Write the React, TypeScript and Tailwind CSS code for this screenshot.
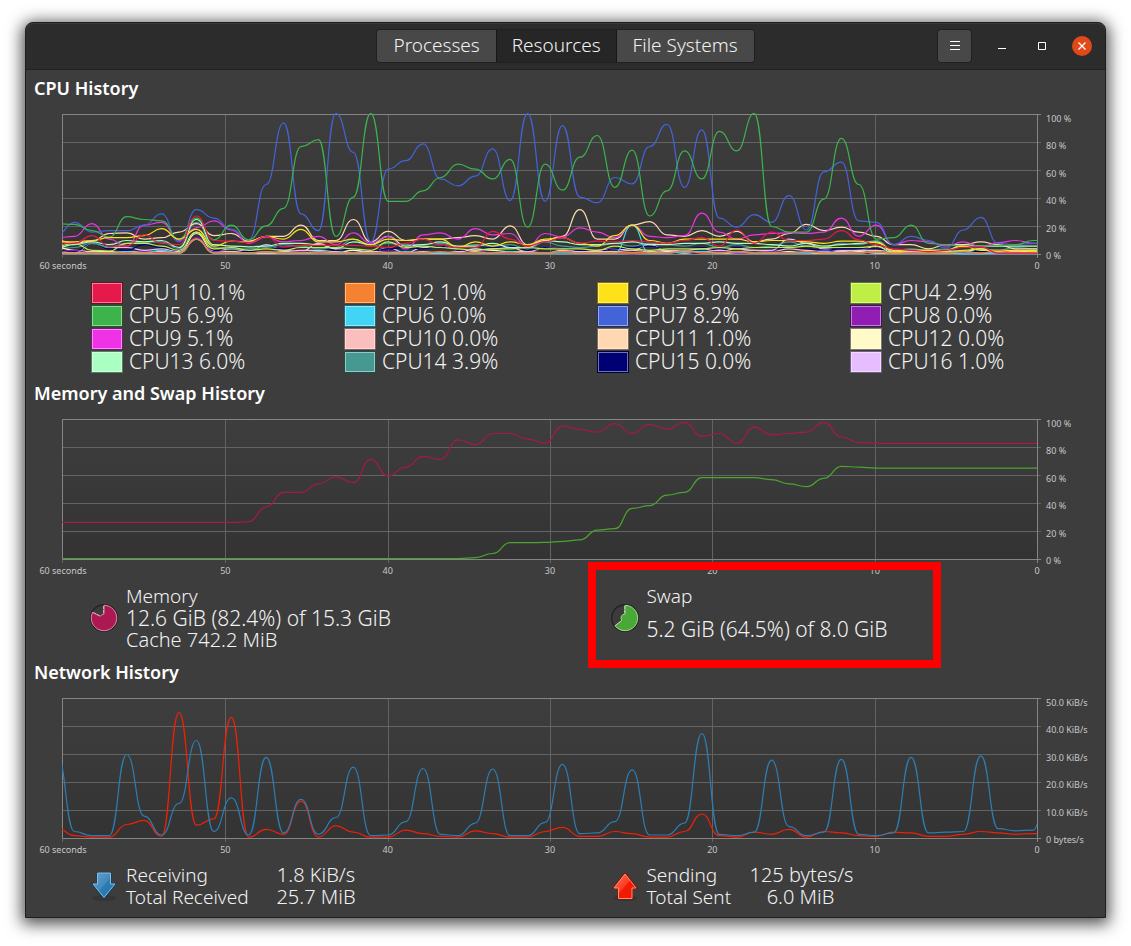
import { useId } from "react";
import type { ReactNode } from "react";

type Series = { name: string; color: string; values: number[] };

const STEP = 17.43;
const FIRST_X = -5;
const PLOT_WIDTH = 975;
const PLOT_HEIGHT = 140;

const fill = (count: number, value: number): number[] => Array<number>(count).fill(value);

const cpuSeries: Series[] = [
  { name: "CPU1", color: "#e6194b", values: [8, 8, 13.5, 6, 6, 14, 8, 7, 27.5, 10, 9.5, 8.5, 13, 5.5, 6.5, 6.5, 6.5, 6.5, 6, 5, 8, 11, 7, 5, 5, 16.5, 11, 6, 9, 12, 8, 9.5, 9, 10, 9, 8, 10, 12, 6, 17.5, 8, 16, 10, 10, 11, 17, 10.5, 7, 4, 3, 2, 3, 5, 5.5, 1, 1, 1, 1] },
  { name: "CPU2", color: "#f58231", values: [1, 1, 1, 1, 1, 1, 1, 1, 11, 1, 1, 1, 2, 1, 1, 1, 1, 1, 1, 1, 1, 1, 2, 1, 1, 1, 1, 1, 1, 2, 1, 1, 1, 1, 1, 1, 3, 1, 1, 2, 1, 1, 1, 2, 1, 1, 1, 2, 1, 1, 1, 1, 2, 1, 3, 1, 1, 1] },
  { name: "CPU3", color: "#ffe119", values: [9, 9, 10, 12, 12, 13.5, 18.5, 11, 18, 6, 9.5, 9, 13, 11, 18, 9, 9, 11, 7, 11, 10, 11, 11, 5, 9, 6, 9, 7, 11, 12, 8, 6, 13.5, 21, 10, 8, 11, 11, 11, 11, 9, 10, 10, 9, 8, 9.5, 9.5, 8.5, 3, 3, 3, 3, 6, 3, 3, 3, 3, 3] },
  { name: "CPU4", color: "#bfef45", values: [6, 8, 3, 2.5, 8, 8, 6, 3, 16, 4, 5, 3, 4, 3, 5, 5, 5, 4, 3, 9, 5, 6, 5, 4, 3, 4, 4, 5, 4, 4, 4, 3, 6, 4, 3, 4, 4, 4, 5, 4, 5, 5, 5, 6, 5, 5, 5, 6, 1, 3, 3, 2, 3, 4, 2, 3, 2, 2] },
  { name: "CPU5", color: "#3cb44b", values: [22, 21.5, 17, 12.5, 27, 25, 24, 11, 26, 10.5, 21, 10.5, 20.5, 33, 77, 82, 13, 41, 100.7, 38, 38, 45.5, 55, 64.5, 61, 54, 68, 19.5, 64.5, 46, 69.5, 85, 48, 74.5, 27.5, 45.5, 74, 54, 88, 74, 100.7, 20, 16, 16, 39.5, 83, 50, 11, 12, 21, 8, 7, 6, 6, 6.5, 7, 10, 10] },
  { name: "CPU6", color: "#42d4f4", values: [1, 1, 1, 1, 2, 1, 3, 1, 11, 1, 1, 1, 2, 1, 1, 2, 1, 1, 1, 1, 2, 1, 1, 1, 1, 1, 2, 1, 1, 1, 1, 1, 1, 21, 1, 1, 2, 2, 1, 2, 1, 1, 1, 1, 2, 1, 1, 2, 1, 1, 1, 1, 0.5, 0.5, 1, 1, 1, 1] },
  { name: "CPU7", color: "#4363d8", values: [14, 23, 16, 17, 17, 21, 29, 9, 32, 26, 18, 10.5, 50, 94, 29, 17, 100.7, 73, 9, 61, 67, 79, 54, 49, 56, 75.5, 38.5, 100.7, 38, 92, 41, 37, 55, 50.5, 77, 93, 48, 89, 26, 19.5, 28.5, 23, 42, 17.5, 59, 66, 24, 23, 7, 13, 10, 4.5, 17.5, 26.5, 8, 7, 8, 7] },
  { name: "CPU8", color: "#911eb4", values: [2, 3, 1, 1, 1, 2, 1, 1, 12, 2, 1, 1, 2, 1, 2, 1, 1, 1, 1, 2, 1, 1, 2, 1, 3, 1, 1, 1, 1, 2, 1, 1, 1, 0.5, 1, 1, 2, 1, 2, 1, 1, 2, 1, 1, 3, 1, 1, 2, 1, 1, 1, 2, 1, 1, 1, 1, 1, 1] },
  { name: "CPU9", color: "#f032e6", values: [12, 13, 22, 11, 6, 21, 23, 10, 19, 24, 17.5, 8, 12.5, 9, 10, 13, 7, 15.5, 8, 13, 4, 14, 15.5, 11, 18.5, 14, 15, 5.5, 15, 12.5, 19, 16, 12, 21, 13, 12, 13.5, 29.5, 16, 11, 14, 15, 15.5, 15, 16, 26, 13, 21, 7, 10, 9, 6, 9, 5.5, 8.5, 10, 8, 8] },
  { name: "CPU10", color: "#fabebe", values: [2, 1, 2, 1, 2, 2, 2, 1, 11, 2, 2, 1, 1, 2, 3, 3, 2, 1, 2, 2, 1, 2, 1, 2, 2, 1, 2, 2, 1, 3, 2, 2, 2, 3, 2, 3, 2, 2, 3, 2, 3, 2, 4, 3, 2, 2, 3, 3, 2, 2, 3, 2, 2, 1, 1, 2, 1, 1] },
  { name: "CPU11", color: "#ffd8b1", values: [10, 8, 9.5, 15, 15.5, 11, 12, 16, 22, 13.5, 15, 9.5, 13, 13, 21, 10, 10, 25, 9, 16.5, 10, 11, 11, 12, 13.5, 11, 20.5, 7, 10, 13, 32, 11, 11, 21, 23.5, 14, 13, 17, 13, 16.5, 9, 11, 15, 21.5, 17, 19.5, 16, 13, 7, 7, 4, 7, 7, 9, 7, 4, 4, 4] },
  { name: "CPU12", color: "#fffac8", values: [5, 3, 2, 2, 1, 1, 1, 1, 15, 2, 2, 1, 1, 1, 1, 1, 1, 3, 2, 1, 1, 1, 1, 1, 4, 3, 2, 1, 1, 2, 1, 1, 1, 1, 1, 2, 1, 2, 1, 1, 1, 1, 2, 1, 1, 1, 2, 1, 1, 2, 1, 1, 2, 4, 1, 2, 2, 2] },
  { name: "CPU13", color: "#aaffc3", values: [5, 7, 9, 7, 10, 9, 10, 5, 25, 7, 6, 5.5, 6, 8, 8, 7, 4, 9, 7, 13, 6, 7, 9, 6, 6, 8, 5, 5, 10, 9, 7, 7, 8, 9, 7, 7, 8, 8, 9, 8, 8, 7, 6, 8, 6, 7, 8, 9, 2, 3, 2, 3, 7, 6, 6, 6, 6, 6] },
  { name: "CPU14", color: "#469990", values: [4, 5, 8, 5, 8, 9, 9, 4, 23, 5, 4, 4, 5, 7, 6, 4, 5, 11, 6, 8, 7, 7, 8, 5, 7, 6, 7, 4, 9, 6, 5, 6, 8, 6, 8, 7, 6, 8, 5, 7, 5, 6, 9, 6, 5, 8, 7, 10, 3, 4, 3, 4, 2, 4, 3, 5, 4, 4] },
  { name: "CPU15", color: "#000075", values: [3, 2, 8, 4, 3, 7, 5, 3, 15, 3, 2, 2, 5, 4, 5, 5, 3, 4, 2, 4, 5, 4, 6, 3, 4, 5, 6, 3, 5, 4, 3, 2, 4, 5, 6, 4, 4, 5, 3, 5, 5, 5, 4, 4, 3, 4, 4, 4, 2, 1, 2, 4, 2, 2, 3, 1, 2, 2] },
  { name: "CPU16", color: "#e6beff", values: [2, 1, 8, 5, 5, 3, 4, 2, 16, 2, 4, 2, 7, 3, 2, 8, 4, 3, 1, 5, 1, 5, 6, 3, 4, 4, 5, 2, 5, 4, 2, 3, 4, 3, 7, 3, 3, 4, 3, 4, 3, 3, 11, 8, 4, 3, 3, 6, 2, 1, 2, 3, 1, 2, 1, 2, 1, 1] },
];

const memorySeries: Series[] = [
  { name: "Memory", color: "#a8174f", values: [...fill(11, 26.5), 27, 37.5, 48, 48, 54, 59, 55, 71.5, 59.5, 66, 73.5, 71.5, 85.5, 82, 90, 90, 86, 83, 95.5, 93, 91, 97, 90, 96.5, 93, 98, 88, 90, 83, 94.5, 89, 90, 91, 98, 87.5, 83.5, ...fill(11, 83)] },
  { name: "Swap", color: "#4aa52f", values: [...fill(24, 0.7), 1.4, 4.3, 12, 12, 12.2, 13, 14, 21, 22, 36.5, 38.5, 46, 48, 58.5, 58.5, 58.5, 58.5, 57, 54, 52, 58, 66.5, 66, ...fill(11, 65.3)] },
];

const networkSeries: Series[] = [
  { name: "Receiving", color: "#2d7db3", values: [60, 5, 2, 2, 60, 16, 2.5, 25, 70, 5, 29, 2.5, 58, 4, 28, 3, 15, 51, 2, 2.5, 12, 50, 3, 2, 11, 49.5, 2, 2, 11.5, 53, 3.5, 4, 12, 49, 2.5, 2.5, 11, 75, 3, 2, 4.5, 56, 8.5, 2, 4.5, 56.5, 3, 2, 4, 58, 4, 4.5, 5, 59, 7, 5.5, 6, 50] },
  { name: "Sending", color: "#ef2006", values: [7.5, 2, 1, 1, 10, 13, 1.5, 90, 9.5, 14, 86.5, 1, 6.5, 3, 26.5, 1, 9, 4.5, 1, 1, 6, 3.5, 1.5, 1, 5.5, 3.5, 1, 1, 5, 8, 1.5, 1.5, 5, 3.5, 1, 1, 5, 17.5, 2, 1, 4.5, 3, 6.5, 1, 5, 4, 2, 1.5, 4.5, 4, 1.5, 1.5, 3, 5, 4, 3, 3.5, 3.5] },
];

function curve(values: number[]): string {
  const point = (i: number): [number, number] => [
    FIRST_X + STEP * i,
    PLOT_HEIGHT + 0.5 - (values[i] / 100) * PLOT_HEIGHT,
  ];
  let [lastX, lastY] = point(0);
  let d = `M${lastX} ${lastY}`;
  for (let i = 1; i < values.length; i++) {
    const [x, y] = point(i);
    const mid = (lastX + x) / 2;
    d += `C${mid} ${lastY} ${mid} ${y} ${x} ${y}`;
    lastX = x;
    lastY = y;
  }
  return d;
}

const timeLabels = ["60 seconds", "50", "40", "30", "20", "10", "0"];
const percentLabels = ["100 %", "80 %", "60 %", "40 %", "20 %", "0 %"];
const rateLabels = ["50.0 KiB/s", "40.0 KiB/s", "30.0 KiB/s", "20.0 KiB/s", "10.0 KiB/s", "0 bytes/s"];
const verticalLines = [0.5, 163.5, 326.5, 488.5, 650.5, 813.5, 975.5];

function Chart({ label, series, scale }: { label: string; series: Series[]; scale: string[] }) {
  const id = useId();
  return (
    <div className="ml-9 flex pt-3 text-[9px] leading-[13px] font-normal text-[#c8c8c8]">
      <div className="min-w-0 flex-1">
        <svg
          role="img"
          aria-label={label}
          viewBox="0 0 975 145"
          preserveAspectRatio="none"
          className="block h-[145px] w-full overflow-visible"
        >
          <defs>
            <linearGradient id={`${id}-bg`} x1="0" y1="0" x2="0" y2="1">
              <stop offset="0" stopColor="#3e3e3e" />
              <stop offset="1" stopColor="#333333" />
            </linearGradient>
            <clipPath id={`${id}-clip`}>
              <rect x="0" y="-1" width={PLOT_WIDTH} height="142" />
            </clipPath>
          </defs>
          <rect x="0" y="0" width={PLOT_WIDTH} height={PLOT_HEIGHT} fill={`url(#${id}-bg)`} />
          <g stroke="#636363">
            {[28.5, 56.5, 84.5, 112.5].map((y) => (
              <path key={y} d={`M0 ${y}H979`} />
            ))}
            {verticalLines.map((x) => (
              <path key={x} d={`M${x} 0V144`} />
            ))}
          </g>
          <path d="M979 .5H.5V140.5H979M975.5 .5V144" fill="none" stroke="#858585" />
          <g clipPath={`url(#${id}-clip)`} fill="none" strokeWidth="1.2">
            {[...series].reverse().map((s) => (
              <path key={s.name} d={curve(s.values)} stroke={s.color} />
            ))}
          </g>
        </svg>
        <div className="flex justify-between pl-px">
          {timeLabels.map((t) => (
            <span key={t} className="flex w-0 justify-center whitespace-nowrap">
              {t}
            </span>
          ))}
        </div>
      </div>
      <div className="-mt-[2px] flex h-[150px] w-17 flex-col justify-between pl-[9px] whitespace-nowrap">
        {scale.map((t) => (
          <span key={t}>{t}</span>
        ))}
      </div>
    </div>
  );
}

function Title({ children }: { children: ReactNode }) {
  return <h2 className="pl-2 text-[18px] leading-7 font-semibold text-white">{children}</h2>;
}

const cpuUsage = [
  "10.1%", "1.0%", "6.9%", "2.9%", "6.9%", "0.0%", "8.2%", "0.0%",
  "5.1%", "0.0%", "1.0%", "0.0%", "6.0%", "3.9%", "0.0%", "1.0%",
];

function Swatch({ name, color }: { name: string; color: string }) {
  return (
    <button type="button" aria-label={`${name} color`} className="h-[22px] w-8">
      <svg viewBox="0 0 32 22" className="block h-[22px] w-8">
        <rect x=".5" y=".5" width="31" height="21" fill={color} stroke={color} />
        <rect x=".5" y=".5" width="31" height="21" fill="none" stroke="#000" strokeOpacity=".5" />
        <rect x="1.5" y="1.5" width="29" height="19" fill="none" stroke="#fff" strokeOpacity=".45" />
      </svg>
    </button>
  );
}

function Pie({ fraction, color, light }: { fraction: number; color: string; light: string }) {
  const angle = fraction * Math.PI * 2;
  const at = (r: number) => `${14 + r * Math.sin(angle)} ${14 - r * Math.cos(angle)}`;
  return (
    <svg viewBox="0 0 28 28" className="size-7" aria-hidden="true">
      <circle cx="14" cy="14" r="13.3" fill="#3b3b3b" stroke="#242424" strokeWidth="1.4" />
      <path
        d={`M14 9.5V1.3A12.7 12.7 0 ${fraction > 0.5 ? 1 : 0} 1 ${at(12.7)}L${at(4)}A4 4 0 0 1 14 10Z`}
        fill={color}
        stroke={light}
        strokeWidth="1"
      />
      <path d={`M13.5 2V10M${at(12)}L${at(5)}`} stroke="#c8c8c8" strokeWidth=".8" strokeDasharray="3 1" />
    </svg>
  );
}

function Arrow({ up }: { up?: boolean }) {
  const id = useId();
  const path = up ? "M14 1L27.5 18H22V28.5H6.5V18H.5Z" : "M6.5 1H21.5V12H27.5L14 28.5L.5 12H6.5Z";
  const inner = up ? "M14 3L25 17H21V27.5H7.5V17H3Z" : "M7.5 2H20.5V13H25L14 26.5L3 13H7.5Z";
  return (
    <svg viewBox="0 0 28 30" className="h-[30px] w-7" aria-hidden="true">
      <defs>
        <linearGradient id={id} x1="0" y1="0" x2="1" y2="1">
          <stop offset=".1" stopColor={up ? "#ff6a50" : "#5d9cc9"} />
          <stop offset=".48" stopColor={up ? "#fa3c22" : "#4389bb"} />
          <stop offset=".52" stopColor={up ? "#f21b02" : "#2b7bb2"} />
          <stop offset="1" stopColor={up ? "#ee1a00" : "#2779b0"} />
        </linearGradient>
      </defs>
      <ellipse cx="14" cy="27" rx="12" ry="3" fill="#303030" fillOpacity=".6" />
      <path d={path} fill={up ? "#8c1204" : "#123f60"} />
      <path d={inner} fill={`url(#${id})`} stroke={up ? "#ff8e79" : "#83bde2"} />
    </svg>
  );
}

const tabs = ["Processes", "Resources", "File Systems"];

export default function App() {
  return (
    <div className="bg-white px-[25px] pt-[22px] pb-7 font-['Noto_Sans','Noto_Sans_CJK_KR',sans-serif]">
      <main className="rounded-t-lg border border-[#1e1e1e] bg-[#3d3d3d] pb-[9px] text-[19px] leading-[22px] font-light text-[#f2f2f2] shadow-[0_3px_16px_3px_rgba(0,0,0,0.7)]">
        <header className="flex h-[47px] items-center rounded-t-lg border-b border-[#202020] bg-[#2c2c2c] px-[13px] shadow-[inset_0_1px_0_#3a3a3a]">
          <div className="flex-1" />
          <nav role="tablist" className="flex h-[34px] overflow-hidden rounded-sm border border-[#202020]">
            {tabs.map((tab) => (
              <button
                key={tab}
                type="button"
                role="tab"
                aria-selected={tab === "Resources"}
                className={
                  tab === "Resources"
                    ? "border-x border-[#161616] bg-[#262626] px-[15px] pb-[2px]"
                    : "bg-[#484848] px-4 pb-[2px]"
                }
              >
                {tab}
              </button>
            ))}
          </nav>
          <div className="flex flex-1 items-center justify-end gap-5">
            <button
              type="button"
              aria-label="Menu"
              className="flex h-[34px] w-[35px] items-center justify-center rounded-sm border border-[#202020] bg-[#484848]"
            >
              <svg viewBox="0 0 10 10" className="size-[10px]" stroke="#fff">
                <path d="M0 .5H10M0 4.5H10M0 8.5H10" />
              </svg>
            </button>
            <button type="button" aria-label="Minimize" className="flex size-5 items-center justify-center">
              <svg viewBox="0 0 8 8" className="size-2" fill="#fff">
                <path d="M0 6H8V7H0Z" />
              </svg>
            </button>
            <button type="button" aria-label="Maximize" className="flex size-5 items-center justify-center">
              <svg viewBox="0 0 8 8" className="size-2" fill="none" stroke="#fff">
                <path d="M.5 .5H7.5V7.5H.5Z" />
              </svg>
            </button>
            <button
              type="button"
              aria-label="Close"
              className="flex size-5 items-center justify-center rounded-full bg-[#e04a18]"
            >
              <svg viewBox="0 0 8 8" className="size-2" fill="none" stroke="#fff" strokeWidth="1.3">
                <path d="M.5 .5L7.5 7.5M7.5 .5L.5 7.5" />
              </svg>
            </button>
          </div>
        </header>

        <section className="pt-1">
          <Title>CPU History</Title>
          <Chart label="CPU history" series={cpuSeries} scale={percentLabels} />
          <ul className="grid grid-cols-4 pt-[9px] pr-[2px] pb-[6px] pl-[65px] text-[21px]">
            {cpuSeries.map((s, i) => (
              <li key={s.name} className="flex h-[23px] items-center gap-[6px]">
                <Swatch name={s.name} color={s.color} />
                <span className="pb-[2px]">
                  {s.name} {cpuUsage[i]}
                </span>
              </li>
            ))}
          </ul>
        </section>

        <section>
          <Title>Memory and Swap History</Title>
          <Chart label="Memory and swap history" series={memorySeries} scale={percentLabels} />
          <div className="grid grid-cols-2 pt-[8px] pb-[7px] pl-[64px]">
            <div className="flex items-center gap-2">
              <Pie fraction={0.824} color="#ab1852" light="#e58bb0" />
              <div>
                <p>Memory</p>
                <p className="text-[21px]">12.6 GiB (82.4%) of 15.3 GiB</p>
                <p className="text-[20px]">Cache 742.2 MiB</p>
              </div>
            </div>
            <div className="relative -ml-[10px] flex items-center gap-2 pl-[23px]">
              <Pie fraction={0.645} color="#4aa836" light="#a6dc98" />
              <div>
                <p>Swap</p>
                <p className="text-[21px] leading-[44px]">5.2 GiB (64.5%) of 8.0 GiB</p>
              </div>
              <div className="pointer-events-none absolute -top-[23px] left-0 h-[106px] w-[353px] border-8 border-[#ff0000]" />
            </div>
          </div>
        </section>

        <section>
          <Title>Network History</Title>
          <Chart label="Network history" series={networkSeries} scale={rateLabels} />
          <div className="grid grid-cols-2 pt-[8px] pl-[64px]">
            <div className="flex items-center gap-2">
              <Arrow />
              <dl className="grid grid-cols-[149px_82px] whitespace-nowrap">
                <dt>Receiving</dt>
                <dd className="text-center text-[20px]">1.8 KiB/s</dd>
                <dt>Total Received</dt>
                <dd className="text-center text-[20px]">25.7 MiB</dd>
              </dl>
            </div>
            <div className="-ml-[10px] flex items-center gap-2 pl-[23px]">
              <Arrow up />
              <dl className="grid grid-cols-[103px_102px] whitespace-nowrap">
                <dt>Sending</dt>
                <dd className="text-center text-[20px]">125 bytes/s</dd>
                <dt>Total Sent</dt>
                <dd className="text-center text-[20px]">6.0 MiB</dd>
              </dl>
            </div>
          </div>
        </section>
      </main>
    </div>
  );
}
